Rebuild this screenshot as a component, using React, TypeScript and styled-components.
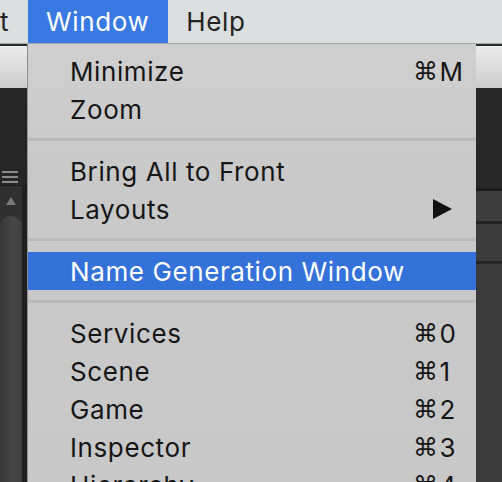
import React from "react";
import styled, { createGlobalStyle } from "styled-components";

const Global = createGlobalStyle`
  html, body { margin: 0; padding: 0; background: #2a2a2a; }
  body { font-family: Inter, "Liberation Sans", "DejaVu Sans", sans-serif; }
`;

const Page = styled.div`
  position: relative;
  width: 502px;
  height: 482px;
  overflow: hidden;
  display: flex;
  flex-direction: column;
  background: #2a2a2a;
`;

const MenuBar = styled.div`
  height: 43px;
  flex: none;
  display: flex;
  align-items: stretch;
  background: #dcdfdf;
  border-bottom: 1px solid #a6a8a8;
  font-size: 26px;
  letter-spacing: 0.6px;
  color: #222;
`;

const BarItem = styled.div<{ $active?: boolean; $pl?: number }>`
  display: flex;
  align-items: center;
  padding: 0 19px 0 ${(p) => (p.$pl ?? 18)}px;
  background: ${(p) => (p.$active ? "#3a79e1" : "transparent")};
  color: ${(p) => (p.$active ? "#fff" : "#242424")};
  white-space: nowrap;
`;

const Editor = styled.div`
  flex: 1;
  display: flex;
  flex-direction: column;
`;

const Toolbar = styled.div`
  height: 42px;
  flex: none;
  border-top: 2px solid #2c2c2c;
  background: linear-gradient(#ececec, #d9d9d9 60%, #cbcbcb);
`;

const Panes = styled.div`
  flex: 1;
  display: flex;
  justify-content: space-between;
`;

const LeftPane = styled.div`
  width: 28px;
  display: flex;
  flex-direction: column;
  background: #262626;
`;

const HierHeader = styled.div`
  height: 98px;
  flex: none;
  display: flex;
  align-items: flex-end;
  padding: 0 0 2px 2px;
  box-sizing: border-box;
  border-bottom: 1px solid #1c1c1c;
`;

const ScrollArea = styled.div`
  flex: 1;
  display: flex;
`;

const Track = styled.div`
  width: 22px;
  display: flex;
  flex-direction: column;
  align-items: center;
  background: #303030;
`;

const ArrowUp = styled.div`
  height: 30px;
  flex: none;
  display: flex;
  align-items: center;
  justify-content: center;
`;

const Thumb = styled.div`
  flex: 1;
  width: 22px;
  border-radius: 11px 11px 0 0;
  background: linear-gradient(90deg, #383838, #474747 60%, #3e3e3e);
`;

const Gutter = styled.div`
  width: 6px;
  background: #1f1f1f;
`;

const RightPane = styled.div`
  width: 26px;
  display: flex;
  flex-direction: column;
  background: #3b3b3b;
`;

const RightBlock = styled.div<{ $h?: number; $bg: string; $line?: string }>`
  flex: ${(p) => (p.$h ? "none" : "1")};
  height: ${(p) => (p.$h ? `${p.$h}px` : "auto")};
  background: ${(p) => p.$bg};
  border-bottom: ${(p) => (p.$line ? `3px solid ${p.$line}` : "none")};
`;

const Dropdown = styled.div`
  position: absolute;
  left: 28px;
  top: 44px;
  width: 448px;
  padding-top: 8px;
  background: linear-gradient(#cfcfcf, #c9c9c9 30%, #c8c8c8);
  box-shadow: -1px 0 0 #8e8e8e;
  font-size: 26px;
  letter-spacing: 0.6px;
  color: #161616;
`;

const Row = styled.div<{ $hl?: boolean }>`
  height: 38px;
  display: flex;
  align-items: center;
  padding: 0 14px 0 42px;
  background: ${(p) => (p.$hl ? "#3471d9" : "transparent")};
  color: ${(p) => (p.$hl ? "#fff" : "#161616")};
  white-space: nowrap;
`;

const Label = styled.span`
  flex: 1;
`;

const Shortcut = styled.span`
  width: 49px;
  display: flex;
  align-items: center;
  white-space: nowrap;
`;

const Cmd = styled.span`
  font-family: "DejaVu Sans", sans-serif;
  font-size: 25px;
  margin-right: 1px;
`;

const SubArrow = styled.svg`
  margin-left: 20px;
`;

const Separator = styled.div`
  height: 24px;
  display: flex;
  flex-direction: column;
  padding-top: 10px;
  box-sizing: border-box;
  &::after {
    content: "";
    height: 3px;
    background: #b9b9b9;
  }
`;

type Item =
  | { sep: true }
  | { label: string; key?: string; sub?: boolean; hl?: boolean };

const items: Item[] = [
  { label: "Minimize", key: "M" },
  { label: "Zoom" },
  { sep: true },
  { label: "Bring All to Front" },
  { label: "Layouts", sub: true },
  { sep: true },
  { label: "Name Generation Window", hl: true },
  { sep: true },
  { label: "Services", key: "0" },
  { label: "Scene", key: "1" },
  { label: "Game", key: "2" },
  { label: "Inspector", key: "3" },
  { label: "Hierarchy", key: "4" },
];

export default function App() {
  return (
    <Page>
      <Global />
      <MenuBar>
        <BarItem $pl={0}>t</BarItem>
        <BarItem $active>Window</BarItem>
        <BarItem>Help</BarItem>
      </MenuBar>
      <Editor>
        <Toolbar />
        <Panes>
          <LeftPane>
            <HierHeader>
              <svg width="16" height="12" viewBox="0 0 16 12">
                <rect x="0" y="0" width="16" height="2" fill="#8a8a8a" />
                <rect x="0" y="5" width="16" height="2" fill="#8a8a8a" />
                <rect x="0" y="10" width="16" height="2" fill="#8a8a8a" />
              </svg>
            </HierHeader>
            <ScrollArea>
              <Track>
                <ArrowUp>
                  <svg width="10" height="8" viewBox="0 0 10 8">
                    <polygon points="5,0 10,8 0,8" fill="#777" />
                  </svg>
                </ArrowUp>
                <Thumb />
              </Track>
              <Gutter />
            </ScrollArea>
          </LeftPane>
          <RightPane>
            <RightBlock $h={100} $bg="#282828" $line="#1b1b1b" />
            <RightBlock $h={30} $bg="#3d3d3d" $line="#232323" />
            <RightBlock $h={37} $bg="#3b3b3b" $line="#242424" />
            <RightBlock $bg="#3a3a3a" />
          </RightPane>
        </Panes>
      </Editor>
      <Dropdown>
        {items.map((it, i) =>
          "sep" in it ? (
            <Separator key={i} />
          ) : (
            <Row key={i} $hl={it.hl}>
              <Label>{it.label}</Label>
              <Shortcut>
                {it.key && (
                  <>
                    <Cmd>⌘</Cmd>
                    {it.key}
                  </>
                )}
                {it.sub && (
                  <SubArrow width="19" height="20" viewBox="0 0 19 20">
                    <polygon points="0,0 19,10 0,20" fill="#111" />
                  </SubArrow>
                )}
              </Shortcut>
            </Row>
          )
        )}
      </Dropdown>
    </Page>
  );
}
